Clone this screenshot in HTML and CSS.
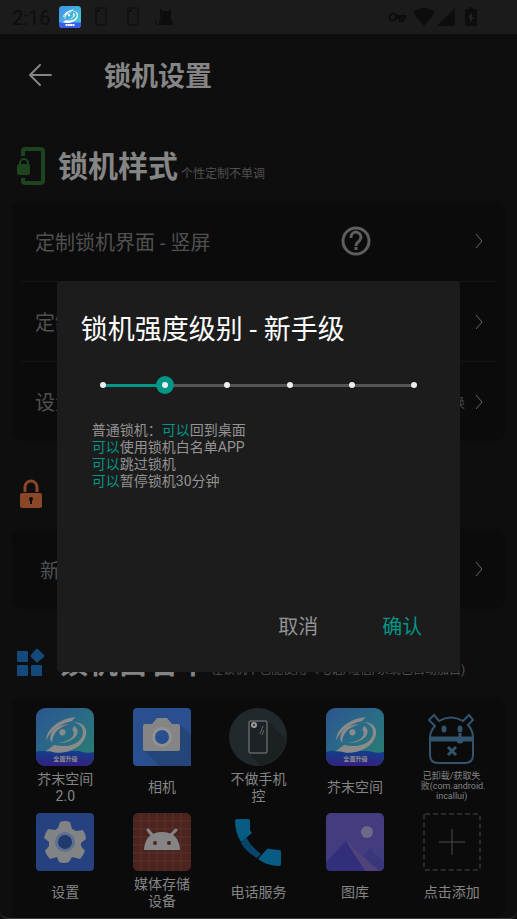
FILE: index.html
```
<!DOCTYPE html>
<html lang="zh-CN">
<head>
<meta charset="UTF-8">
<meta name="viewport" content="width=device-width, initial-scale=1.0">
<title>锁机设置</title>
<link rel="stylesheet" href="styles.css">
</head>
<body>

<!-- shared drawings -->
<svg class="defs" width="0" height="0" aria-hidden="true">
  <defs>
    <linearGradient id="sky" x1="0" y1="0" x2="1" y2="1">
      <stop offset="0" stop-color="#2b5590"/>
      <stop offset=".5" stop-color="#2a6c86"/>
      <stop offset="1" stop-color="#28806c"/>
    </linearGradient>
    <linearGradient id="sea" x1="0" y1="0" x2="0" y2="1">
      <stop offset="0" stop-color="#133f8c"/>
      <stop offset="1" stop-color="#342080"/>
    </linearGradient>
    <linearGradient id="skyLight" x1="0" y1="0" x2="1" y2="1">
      <stop offset="0" stop-color="#3f8fee"/>
      <stop offset="1" stop-color="#45d3d0"/>
    </linearGradient>
    <clipPath id="round"><rect width="57" height="57" rx="9"/></clipPath>
    <symbol id="swirl" viewBox="0 0 57 57">
      <path d="M39 9C24 10 10 20 10 32c3-9 14-17 25-19z"/>
      <path d="M36 14c8 1 11 6 10 12-2 9-15 14-28 10l-9 7c4-1 7 0 11 1 14 0 26-6 29-17 2-8-4-14-13-13z"/>
      <path d="M33 16c-11 0-19 6-19 14 0 2 1 3 2 4 0-9 6-15 17-18z"/>
      <path d="M38 18c4 3 4 8-1 12-4 3-10 5-15 4 10-1 16-5 15-11-2-1-1-4 1-5z"/>
      <circle cx="26" cy="24" r="3"/>
    </symbol>
    <symbol id="mustard" viewBox="0 0 57 57">
      <g clip-path="url(#round)">
        <rect width="57" height="57" fill="url(#sky)"/>
        <path d="M0 43q8-2 15 0t15 0t15 0t12 0v14H0z" fill="url(#sea)"/>
        <use href="#swirl" width="57" height="57" fill="#8b8b8b"/>
        <text class="logo-text" x="29" y="52" text-anchor="middle">全面升级</text>
      </g>
    </symbol>
    <symbol id="chevron" viewBox="0 0 10 16">
      <path d="M2 1l6 7-6 7" fill="none" stroke="#666" stroke-width="1"/>
    </symbol>
  </defs>
</svg>

<div class="screen">
  <div class="status">
    <span class="time">2:16</span>
    <svg class="st-logo" width="22" height="22" viewBox="0 0 57 57">
      <g clip-path="url(#round)">
        <rect width="57" height="57" fill="url(#skyLight)"/>
        <path d="M0 43h57v14H0z" fill="#3a5cf0"/>
        <use href="#swirl" width="57" height="57" fill="#fff"/>
        <path d="M17 49h24" stroke="#fff" stroke-width="5" stroke-dasharray="5 1"/>
      </g>
    </svg>
    <svg class="st-phone" width="12" height="20" viewBox="0 0 12 20"><rect x="1" y="1" width="10" height="17" fill="none" stroke="#0d0d0d"/><circle cx="3.500" cy="3.500" r="1.500"/><path d="M7 8l1-2" stroke="#0d0d0d"/></svg>
    <svg class="st-phone" width="12" height="20" viewBox="0 0 12 20"><rect x="1" y="1" width="10" height="17" fill="none" stroke="#0d0d0d"/><circle cx="3.500" cy="3.500" r="1.500"/><path d="M7 8l1-2" stroke="#0d0d0d"/></svg>
    <svg class="st-cat" width="18" height="18" viewBox="0 0 18 18"><path d="M5 17c-5 0-6-4-4-5 1 0 1 1 0 2 0 1 1 2 3 2 0-3 1-5 2-7-2-3-1-6-1-8l3 2h5l3-2c0 3 1 5-1 8 2 3 3 5 3 8z"/><path d="M8 5h1M12 5h1" stroke="#1b1b1b"/></svg>
    <div class="st-right">
      <svg width="18" height="12" viewBox="0 0 18 12"><circle cx="5" cy="6" r="3.500" fill="none" stroke="#0d0d0d" stroke-width="2"/><path d="M9 5h8v2h-2v3h-3V7H9" fill="none" stroke="#0d0d0d" stroke-width="2"/></svg>
      <svg class="wifi" width="22" height="18" viewBox="0 0 22 18"><path d="M0 4.500C6-1.500 16-1.500 22 4.500L11 18z"/></svg>
      <svg class="signal" width="18" height="18" viewBox="0 0 18 18"><path d="M18 0v18H0z"/></svg>
      <svg class="battery" width="12" height="20" viewBox="0 0 12 20"><path d="M4 0h4v2h3q1 0 1 1v15q0 1-1 1H1q-1 0-1-1V3q0-1 1-1h3z"/><path d="M7 5L3 11h2v5l4-6H7z" fill="#222"/></svg>
    </div>
  </div>

  <header class="bar">
    <button class="back" aria-label="返回"><svg width="24" height="24" viewBox="0 0 24 24"><path d="M23 12H2M12 2L2 12l10 10" fill="none" stroke="#858585" stroke-width="2" stroke-linecap="round" stroke-linejoin="round"/></svg></button>
    <h1>锁机设置</h1>
  </header>

  <main>
    <div class="heading">
      <svg class="heading-icon" width="30" height="38" viewBox="0 0 30 38"><path d="M7 9V4q0-2 2-2h15q3 0 3 2v30q0 2-3 2H9q-2 0-2-2v-3" fill="none" stroke="#1d431f" stroke-width="4"/><path d="M4 18v-2a4 4 0 0 1 8 0v2" fill="none" stroke="#0e0e0e" stroke-width="5"/><path d="M4 18v-2a4 4 0 0 1 8 0v2" fill="none" stroke="#1d431f" stroke-width="2"/><rect y="17" x="1" width="13" height="11" rx="2" fill="#1d431f"/></svg>
      <h2>锁机样式</h2><span class="note">个性定制不单调</span>
    </div>
    <section class="card list">
      <div class="row"><span class="name">定制锁机界面 - 竖屏</span>
        <button class="help" aria-label="帮助"><svg width="30" height="30" viewBox="0 0 30 30" fill="none" stroke="#5e5e5e"><circle cx="15" cy="15" r="13" stroke-width="3"/><path d="M10 12a5 5 0 1 1 9 2C17 17 15 16 15 20" stroke-width="3"/><path d="M15 21v3" stroke-width="3"/></svg></button>
        <svg class="arrow" width="10" height="16"><use href="#chevron"/></svg></div>
      <div class="row"><span class="name">定制锁机界面 - 横屏</span><svg class="arrow" width="10" height="16"><use href="#chevron"/></svg></div>
      <div class="row"><span class="name">设置锁机壁纸</span><span class="value">点击切换</span><svg class="arrow" width="10" height="16"><use href="#chevron"/></svg></div>
    </section>

    <div class="heading">
      <svg class="heading-icon" width="30" height="38" viewBox="0 0 30 38"><path d="M9 17v-5a6 6 0 0 1 12 0v5" fill="none" stroke="#8a4626" stroke-width="3"/><rect x="4" y="18" width="22" height="15" rx="2" fill="#8a4626"/><path d="M15 24v5" stroke="#0e0e0e" stroke-width="2"/><circle cx="15" cy="24" r="2" fill="#0e0e0e"/></svg>
    </div>
    <section class="card list">
      <div class="row level"><span class="name">新手级</span><svg class="arrow" width="10" height="16"><use href="#chevron"/></svg></div>
    </section>

    <div class="heading">
      <svg class="heading-icon" width="30" height="38" viewBox="0 0 30 38" fill="#13497b"><rect x="1" y="8" width="11" height="11" rx="1"/><rect x="1" y="22" width="11" height="11" rx="1"/><rect x="15" y="22" width="11" height="11" rx="1"/><path d="M20 6q1-1 2 0l6 6q1 1 0 2l-6 5q-1 1-2 0l-5-5q-1-1 0-2z"/></svg>
      <h2>锁机白名单</h2><span class="note">在锁机中也能使用（电话/短信/系统已自动加白)</span>
    </div>
    <section class="card apps">
      <div class="app">
        <svg class="icon" viewBox="0 0 57 57"><use href="#mustard"/></svg>
        <span class="label">芥末空间2.0</span>
      </div>
      <div class="app">
        <svg class="icon" viewBox="0 0 58 58"><rect width="58" height="58" rx="4" fill="#2a4f8e"/><path d="M47 17l11 9v32H27L11 42z" fill="#254579"/><path d="M12 16h7l5-6h10l5 6h6q2 0 2 2v23q0 2-2 2H12q-2 0-2-2V18q0-2 2-2z" fill="#858585"/><circle cx="29" cy="29" r="10" fill="#929292"/><circle cx="29" cy="29" r="7" fill="#2a4f8e"/></svg>
        <span class="label">相机</span>
      </div>
      <div class="app">
        <svg class="icon" viewBox="0 0 58 58"><circle cx="29" cy="29" r="29" fill="#22292d"/><path d="M38 13l19 18q-3 22-25 27L20 45z" fill="#1b2022"/><rect x="20" y="13" width="18" height="32" rx="1" fill="#1c2225" stroke="#858585"/><circle cx="25" cy="17" r="2" fill="#222" stroke="#999" stroke-width="2"/><path d="M31 26l3-8M33 27l2-5" stroke="#666"/></svg>
        <span class="label">不做手机控</span>
      </div>
      <div class="app">
        <svg class="icon" viewBox="0 0 57 57"><use href="#mustard"/></svg>
        <span class="label">芥末空间</span>
      </div>
      <div class="app">
        <svg class="icon" viewBox="0 0 58 58" fill="none" stroke="#33546d" stroke-width="2"><path d="M7 30v17q0 8 8 8h27q8 0 8-8V30q0-8-5-13l5-5-4-5-6 6q-12-7-24 0l-5-6-5 5 6 6q-5 5-5 12z"/><path d="M7 31h43" stroke-width="5"/><ellipse cx="21" cy="21" rx="1" ry="2" stroke-width="3"/><ellipse cx="37" cy="21" rx="1" ry="2" stroke-width="3"/><path d="M37 25v4" stroke-width="3"/><circle cx="37" cy="32" r="2" stroke-width="3"/><path d="M25 39l8 8M33 39l-8 8" stroke-width="3"/></svg>
        <span class="label small">已卸载/获取失<br>败(com.android.<br>incallui)</span>
      </div>
      <div class="app">
        <svg class="icon" viewBox="0 0 58 58"><rect width="58" height="58" rx="4" fill="#25417f"/><path d="M24 9q5-2 10 0l2 7 4 2 7-1q3 4 3 9l-5 4v3l4 5q-2 5-5 8l-8-2-3 5q-5 2-10 0l-2-5-7 2q-4-4-5-8l4-5v-4l-5-4q1-5 4-9l7 1 3-2z" fill="#818384"/><circle cx="29" cy="29" r="10" fill="#5e6f92"/><circle cx="29" cy="29" r="7" fill="#213a6c"/></svg>
        <span class="label">设置</span>
      </div>
      <div class="app">
        <svg class="icon" viewBox="0 0 58 58"><rect width="58" height="58" rx="5" fill="#4b2420"/><path d="M8 0v58M16 0v58M24 0v58M32 0v58M40 0v58M48 0v58M0 8h58M0 16h58M0 24h58M0 32h58M0 40h58M0 48h58" stroke="#5a322d"/><path d="M11 37q1-18 18-18t18 18z" fill="#858585"/><path d="M15 17l5 6M43 17l-6 6" stroke="#858585" stroke-width="3" stroke-linecap="round"/><circle cx="22" cy="30" r="2" fill="#4b2420"/><circle cx="36" cy="30" r="2" fill="#4b2420"/></svg>
        <span class="label">媒体存储设备</span>
      </div>
      <div class="app">
        <svg class="icon" viewBox="0 0 58 58"><path d="M6 8q0-2 2-2h11q2 0 2 2v9l2 3-11 9Q6 19 6 8z" fill="#075c84"/><path d="M29 46l9-10q1-1 3 0l9 1q2 0 2 2v12q0 2-2 2-12 0-21-7z" fill="#075c84"/><path d="M12 30l5-6q5 10 15 17l-4 4Q17 39 12 30z" fill="#07456c"/></svg>
        <span class="label">电话服务</span>
      </div>
      <div class="app">
        <svg class="icon" viewBox="0 0 58 58"><rect width="58" height="58" rx="5" fill="#433c7e"/><path d="M44 35l14 14v4q0 5-5 5H25z" fill="#39367c"/><path d="M20 28L0 49v4q0 5 5 5h35z" fill="#312e7a"/><path d="M20 28l33 30H39z" fill="#51427a"/><circle cx="41" cy="19" r="6" fill="#706985"/></svg>
        <span class="label">图库</span>
      </div>
      <div class="app">
        <svg class="icon" viewBox="0 0 58 58" fill="none" stroke="#4a4a4a"><rect x="1" y="1" width="56" height="56" rx="1" stroke-dasharray="5 3"/><path d="M16 29h26M29 16v26"/></svg>
        <span class="label">点击添加</span>
      </div>
    </section>
  </main>
</div>

<div class="dialog" role="dialog" aria-labelledby="dlgTitle">
  <h3 id="dlgTitle">锁机强度级别 - 新手级</h3>
  <div class="slider">
    <input type="range" id="level" min="0" max="5" value="1" aria-labelledby="dlgTitle">
    <div class="ticks"><i></i><i></i><i></i><i></i><i></i><i></i></div>
  </div>
  <p class="desc">普通锁机：<b>可以</b>回到桌面<br><b>可以</b>使用锁机白名单APP<br><b>可以</b>跳过锁机<br><b>可以</b>暂停锁机30分钟</p>
  <div class="actions">
    <button>取消</button>
    <button class="ok">确认</button>
  </div>
</div>

</body>
</html>
```
FILE: styles.css
```
* {
  box-sizing: border-box;
}
body {
  margin: 0;
  background: #0e0e0e;
  color: #505050;
  font-family: Roboto, "Noto Sans CJK SC", sans-serif;
}
h1, h2, h3, p {
  margin: 0;
}
button {
  padding: 0;
  border: 0;
  background: none;
  font-family: inherit;
}
svg {
  display: block;
  flex: none;
}
.defs {
  position: absolute;
}
.logo-text {
  font-size: 6px;
  font-weight: bold;
  fill: #8b8b8b;
}
.screen {
  border-bottom: 1px solid #3a3a3c;
  border-radius: 0 0 8px 8px;
}

/* status bar */
.status {
  display: flex;
  align-items: center;
  height: 34px;
  padding: 0 40px 0 12px;
  background: #1b1b1b;
  color: #0d0d0d;
  fill: #0d0d0d;
}
.time {
  width: 47px;
  padding-top: 2px;
  font-size: 20px;
}
.st-logo {
  margin-right: 14px;
}
.st-phone {
  margin-right: 20px;
}
.st-cat {
  margin-left: -4px;
}
.st-right {
  display: flex;
  align-items: center;
  margin-left: auto;
}
.wifi {
  margin-left: 7px;
}
.signal {
  margin-left: 2px;
}
.battery {
  margin-left: 10px;
}

/* title bar */
.bar {
  display: flex;
  align-items: center;
  height: 82px;
  padding: 0 28px;
  border-bottom: 1px solid #0c0c0c;
}
.back {
  margin-right: 52px;
}
.bar h1 {
  padding-top: 4px;
  font-size: 27px;
  line-height: 32px;
  color: #858585;
}

main {
  padding: 13px 12px 0;
}
.heading {
  display: flex;
  align-items: center;
  height: 72px;
  padding: 2px 0 0 4px;
}
.card + .heading {
  height: 88px;
  padding-top: 18px;
}
.heading-icon {
  margin-right: 12px;
}
.heading h2 {
  padding-top: 2px;
  font-size: 30px;
  line-height: 36px;
  color: #858585;
}
.note {
  margin: 16px 0 0 3px;
  font-size: 12px;
  line-height: 16px;
  white-space: nowrap;
}

.card {
  border-radius: 10px;
  background: #0b0b0b;
}
.row {
  display: flex;
  align-items: center;
  height: 80px;
  margin: 0 8px;
  padding: 0 13px 0 15px;
}
.row + .row {
  border-top: 1px solid #151515;
}
.level {
  padding-left: 20px;
}
.name {
  flex: 1;
  font-size: 20px;
}
.help {
  margin-right: 103px;
}
.value {
  margin-right: 9px;
  font-size: 13px;
  color: #444;
}

/* white list */
.apps {
  display: grid;
  grid-template-columns: repeat(5, 1fr);
  row-gap: 4px;
  padding: 11px 5px 4px;
}
.app {
  display: flex;
  flex-direction: column;
  align-items: center;
}
.icon {
  width: 58px;
  height: 58px;
}
.label {
  display: flex;
  align-items: center;
  width: 62px;
  height: 43px;
  justify-content: center;
  font-size: 14px;
  line-height: 17px;
  text-align: center;
  color: #858585;
}
.small {
  display: block;
  padding-top: 5px;
  font-size: 9px;
  line-height: 10px;
  white-space: nowrap;
}

/* dialog lies over the page */
.dialog {
  position: fixed;
  top: 281px;
  left: 11%;
  right: 11%;
  padding: 30px 24px 25px;
  border-radius: 4px;
  background: #1c1c1c;
}
.dialog h3 {
  font-size: 27px;
  font-weight: normal;
  line-height: 38px;
  color: #fff;
}
.slider {
  position: relative;
  margin: 27px 13px 0;
  height: 18px;
}
.slider input {
  display: block;
  width: 100%;
  height: 18px;
  margin: 0;
  background: linear-gradient(#009688, #009688) 9px 50% / 20% 3px no-repeat, linear-gradient(#555, #555) 50% 50% / calc(100% - 18px) 3px no-repeat;
  -webkit-appearance: none;
  appearance: none;
}
.slider input::-webkit-slider-thumb {
  width: 18px;
  height: 18px;
  border-radius: 50%;
  background: #009688;
  -webkit-appearance: none;
}
.ticks {
  position: absolute;
  top: 6px;
  left: 6px;
  right: 6px;
  display: flex;
  justify-content: space-between;
  pointer-events: none;
}
.ticks i {
  width: 6px;
  height: 6px;
  border-radius: 50%;
  background: #eee;
}
.desc {
  height: 185px;
  margin: 28px 11px 0;
  font-size: 14px;
  line-height: 17px;
  color: #949494;
}
.desc b {
  font-weight: normal;
  color: #009688;
}
.actions {
  display: flex;
  justify-content: flex-end;
  gap: 64px;
  padding-right: 14px;
}
.actions button {
  font-size: 20px;
  line-height: 40px;
  color: #949494;
}
.actions .ok {
  color: #009688;
}
```
